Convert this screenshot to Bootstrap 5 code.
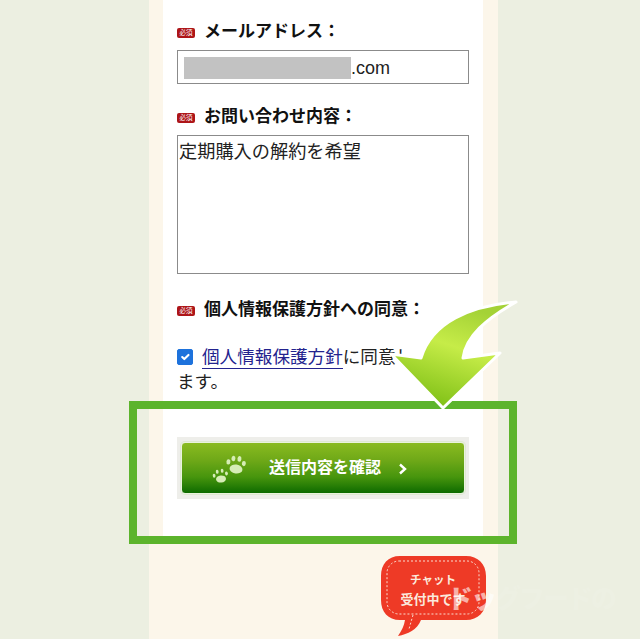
<!DOCTYPE html>
<html lang="ja">
<head>
<meta charset="utf-8">
<title>お問い合わせ</title>
<link rel="stylesheet" href="https://cdn.jsdelivr.net/npm/bootstrap@5.3.0/dist/css/bootstrap.min.css">
<style>
html,body{height:639px;overflow:hidden;background:#ecefe1;}
body{font-family:"Liberation Sans","Noto Sans CJK JP",sans-serif;color:#111;position:relative;}
.cream-col{width:349px;height:639px;margin-left:149px;padding:0 15px 0 14px;background:#fcf6ea;}
.white-panel{background:#fff;padding:20px 14px 41px;}
.req-label{font-size:17px;line-height:24px;font-weight:700;color:#111;margin:0;gap:9px;}
.req-label-last{padding-top:1px;margin-bottom:-1px;}
.req-badge{width:18px;height:10px;background:#ad1518;border-radius:2px;color:#fff;font-size:6.5px;line-height:10px;font-weight:400;text-align:center;flex:none;margin-top:2px;}
.field-email{height:34px;margin:6px 0 21px;border:1px solid #8b8b8b;border-radius:0;padding:1px 0 0 6px;font-size:18px;line-height:32px;color:#222;display:flex;align-items:center;font-family:"Liberation Sans",sans-serif;}
.redact{display:block;width:167px;height:22px;background:#c2c2c2;}
.field-body{height:139px;margin:6px 0 23px;border:1px solid #8b8b8b;border-radius:0;padding:4px 1px;font-size:18.2px;line-height:24px;color:#222;resize:none;}
.agree{margin:24px 0 42px;font-size:17.6px;line-height:25px;color:#222;}
.agree .form-check-input{width:16px;height:16px;margin:0 9px 0 0;vertical-align:-2px;float:none;border-radius:2px;background-color:#1d72dc;border-color:#1d72dc;}
.agree a{color:#23238e;text-decoration:none;border-bottom:1px solid #23238e;padding-bottom:1px;}
.btn-frame{background:#eeeeea;padding:5px 4px;height:62px;}
.btn-send{width:100%;height:52px;border:1px solid #eaf3dd;border-radius:4px;background:linear-gradient(#8abb20 0%,#6ea818 35%,#47950d 68%,#0e6b00 100%);color:#fff;font-size:16px;font-weight:700;position:relative;padding:0;box-shadow:0 0 0 1px #dfe8d3;}
.btn-send:hover{background:linear-gradient(#8abb20 0%,#6ea818 35%,#47950d 68%,#0e6b00 100%);color:#fff;}
.btn-send span{margin-left:4px;}
.paws{position:absolute;left:30px;top:8px;}
.chev{position:absolute;left:216px;top:20px;}
.hl-box{position:absolute;left:129px;top:401px;width:388px;height:143px;border:8px solid #5cb42c;pointer-events:none;}
.arrow-over{position:absolute;left:385px;top:296px;}
.chat-bubble{position:absolute;left:380px;top:555px;}
.chat-txt{position:absolute;left:381px;top:570px;width:104px;text-align:center;color:#fbe9dc;font-size:13px;line-height:19px;font-weight:700;}
.chat-first{font-size:11.5px;}
.wm{position:absolute;left:447px;top:582px;color:#fff;opacity:.6;font-size:26px;line-height:34px;font-weight:900;letter-spacing:-2px;white-space:nowrap;}
.wm2{opacity:.15;}
</style>
</head>
<body>
<main class="cream-col">
  <form class="white-panel">
    <label class="req-label d-flex align-items-center"><span class="req-badge">必須</span>メールアドレス：</label>
    <div class="form-control field-email"><span class="redact"></span>.com</div>
    <label class="req-label d-flex align-items-center"><span class="req-badge">必須</span>お問い合わせ内容：</label>
    <textarea class="form-control field-body" readonly>定期購入の解約を希望</textarea>
    <label class="req-label req-label-last d-flex align-items-center"><span class="req-badge">必須</span>個人情報保護方針への同意：</label>
    <p class="agree"><input class="form-check-input" type="checkbox" checked aria-label="同意"><a href="#">個人情報保護方針</a>に同意し<br>ます。</p>
    <div class="btn-frame">
      <button type="button" class="btn btn-send">
        <svg class="paws" width="50" height="36" viewBox="0 0 50 36" fill="#d6edb6">
          <g transform="translate(-7 0) rotate(8 31 18)"><ellipse cx="31" cy="18" rx="6.5" ry="4.5"/><ellipse cx="22.5" cy="12" rx="2" ry="2.6"/><ellipse cx="27" cy="8" rx="2" ry="2.8"/><ellipse cx="33" cy="7.5" rx="2" ry="2.8"/><ellipse cx="38" cy="11.5" rx="2" ry="2.6"/></g>
          <g transform="translate(0 -4) rotate(-6 9 32)"><ellipse cx="9" cy="32" rx="5" ry="3.6"/><ellipse cx="2.5" cy="28" rx="1.4" ry="2"/><ellipse cx="6" cy="24.5" rx="1.4" ry="2"/><ellipse cx="11" cy="24" rx="1.4" ry="2"/><ellipse cx="15" cy="27" rx="1.4" ry="2"/></g>
        </svg>
        <span>送信内容を確認</span>
        <svg class="chev" width="10" height="12" viewBox="0 0 10 12" fill="none" stroke="#fff" stroke-width="2.4"><path d="M2 1.5 7 6 2 10.5"/></svg>
      </button>
    </div>
  </form>
</main>
<div class="hl-box"></div>
<svg class="arrow-over" width="136" height="120" viewBox="385 296 136 120">
  <defs><linearGradient id="ag" x1="0.75" y1="0.1" x2="0.4" y2="1"><stop offset="0" stop-color="#a4d236"/><stop offset=".4" stop-color="#c6ec48"/><stop offset="1" stop-color="#7fc016"/></linearGradient></defs>
  <path d="M516 302C470 306 432 322 421 358L391 354 443 408 500 353 463 358C466 336 486 319 516 302Z" fill="url(#ag)" stroke="#fff" stroke-width="3" stroke-linejoin="round"/>
</svg>
<svg class="chat-bubble" width="108" height="84" viewBox="0 0 108 84">
  <path d="M20 1H86C98 1 106 9 106 21V45C106 57 98 65 86 65H41C37 75 28 79 18 81 22 75 24 71 25 65H20C8 65 1 57 1 45V21C1 9 8 1 20 1Z" fill="#ee3a26"/>
  <rect x="7" y="6" width="92" height="53" rx="12" fill="none" stroke="#f9dccf" stroke-width="1" stroke-dasharray="2 2"/>
  <path d="M33 60 29 74" stroke="#f9dccf" stroke-width="1" stroke-dasharray="2 2"/>
</svg>
<div class="chat-txt"><span class="chat-first">チャット</span><br>受付中です</div>
<div class="wm">ドッ<span class="wm2">グフードの</span></div>
<script src="https://cdn.jsdelivr.net/npm/bootstrap@5.3.0/dist/js/bootstrap.bundle.min.js"></script>
</body>
</html>
